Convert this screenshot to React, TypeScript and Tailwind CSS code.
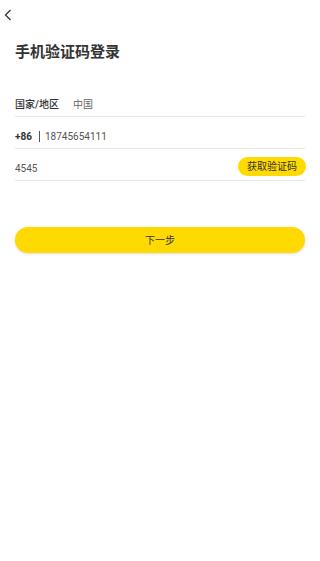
import React, { useState } from 'react';

export default function App() {
  const [code, setCode] = useState('4545');

  return (
    <div
      className="w-[320px] h-[561px] bg-white text-[#333]"
      style={{ fontFamily: 'Roboto, "Noto Sans CJK SC", sans-serif' }}
    >
      <div className="h-[30px] pl-[4px] pt-[9px]">
        <svg width="8" height="12" viewBox="0 0 8 12" fill="none">
          <path d="M6.5 1 L1.5 6 L6.5 11" stroke="#333" strokeWidth="1.3" />
        </svg>
      </div>

      <div className="px-[15px]">
        <h1 className="mt-[12px] text-[15px] font-bold leading-[20px] text-[#333]">手机验证码登录</h1>

        <div className="mt-[23px]">
          <div className="flex items-end h-[32px] pb-[3px] border-b border-[#e8e8e8]">
            <span className="text-[10px] leading-[16px] font-medium text-[#333] w-[58px]">国家/地区</span>
            <span className="text-[10px] leading-[16px] text-[#666]">中国</span>
          </div>

          <div className="flex items-end h-[32px] pb-[3px] border-b border-[#e8e8e8]">
            <span className="text-[10px] leading-[16px] font-bold text-[#333]">+86</span>
            <span className="ml-[7px] mr-[5px] mb-[3px] h-[11px] w-px bg-[#555]"></span>
            <span className="text-[10px] leading-[16px] text-[#555]">18745654111</span>
          </div>

          <div className="flex items-end justify-between h-[32px] pb-[3px] border-b border-[#e8e8e8]">
            <input
              value={code}
              onChange={(e) => setCode(e.target.value)}
              className="w-[150px] text-[10px] leading-[16px] text-[#555] outline-none bg-transparent"
            />
            <button className="h-[19px] w-[68px] -mr-px rounded-full bg-[#ffda00] text-[10px] text-[#333] leading-[19px] mb-[1px]">
              获取验证码
            </button>
          </div>
        </div>

        <button className="mt-[46px] w-full h-[26px] rounded-full bg-[#ffda00] text-[10px] text-[#333] shadow-[0_1px_3px_rgba(0,0,0,0.15)]">
          下一步
        </button>
      </div>
    </div>
  );
}
